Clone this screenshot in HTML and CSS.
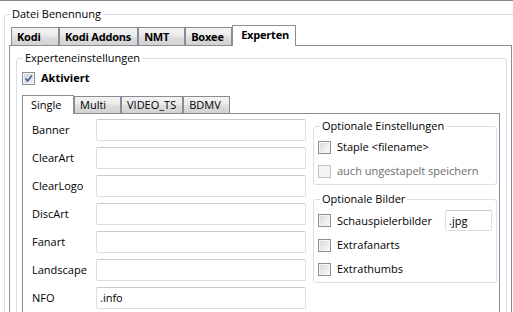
FILE: index.html
```html
<!DOCTYPE html>
<html lang="de">
<head>
    <meta charset="UTF-8">
    <title>Datei Benennung</title>
    <link rel="stylesheet" href="styles.css">
</head>
<body>
<div class="window">
    <div class="group group-main">
        <div class="group-title">Datei Benennung</div>
        <div class="tabs tabs-main">
            <div class="tab">Kodi</div>
            <div class="tab">Kodi Addons</div>
            <div class="tab">NMT</div>
            <div class="tab">Boxee</div>
            <div class="tab active">Experten</div>
        </div>
        <div class="tab-panel panel-main">
            <div class="group group-expert">
                <div class="group-title">Experteneinstellungen</div>
                <label class="check-row check-bold">
                    <span class="checkbox checked">
                        <svg viewBox="0 0 11 11" width="11" height="11"><path d="M2.5 5.5 L4.6 8 L8.8 2.4" /></svg>
                    </span>
                    Aktiviert
                </label>
                <div class="tabs tabs-sub">
                    <div class="tab active">Single</div>
                    <div class="tab">Multi</div>
                    <div class="tab tab-wide">VIDEO_TS</div>
                    <div class="tab">BDMV</div>
                </div>
                <div class="tab-panel panel-sub">
                    <div class="fields">
                        <div class="field"><span class="field-label">Banner</span><span class="input"></span></div>
                        <div class="field"><span class="field-label">ClearArt</span><span class="input"></span></div>
                        <div class="field"><span class="field-label">ClearLogo</span><span class="input"></span></div>
                        <div class="field"><span class="field-label">DiscArt</span><span class="input"></span></div>
                        <div class="field"><span class="field-label">Fanart</span><span class="input"></span></div>
                        <div class="field"><span class="field-label">Landscape</span><span class="input"></span></div>
                        <div class="field"><span class="field-label">NFO</span><span class="input">.info</span></div>
                    </div>
                    <div class="options">
                        <div class="group group-option">
                            <div class="group-title">Optionale Einstellungen</div>
                            <label class="check-row option-row first-row"><span class="checkbox"></span>Staple &lt;filename&gt;</label>
                            <label class="check-row option-row disabled"><span class="checkbox"></span>auch ungestapelt speichern</label>
                        </div>
                        <div class="group group-option group-pictures">
                            <div class="group-title">Optionale Bilder</div>
                            <div class="check-row option-row first-row">
                                <span class="checkbox"></span>Schauspielerbilder
                                <span class="input input-small">.jpg</span>
                            </div>
                            <label class="check-row option-row"><span class="checkbox"></span>Extrafanarts</label>
                            <label class="check-row option-row"><span class="checkbox"></span>Extrathumbs</label>
                        </div>
                    </div>
                </div>
            </div>
        </div>
    </div>
</div>
</body>
</html>
```

FILE: styles.css
```css
html,
body {
    margin: 0;
    height: 312px;
    overflow: hidden;
    background: #fff;
}

body {
    color: #000;
    font-family: "Open Sans", "Noto Sans", sans-serif;
    font-size: 11px;
    line-height: 16px;
}

.window {
    border-top: 1px solid #888;
}

/* group boxes: the title sits on the top border */

.group {
    border: 1px solid #d5dfe5;
    border-radius: 3px;
}

.group-title {
    width: fit-content;
    height: 16px;
    margin: -9px 0 0 1px;
    padding: 0 2px;
    background: #fff;
    line-height: 16px;
    white-space: nowrap;
}

.group-main {
    margin: 13px -20px 0 4px;
    padding: 0 0 0 4px;
}

.group-expert {
    margin: 12px 4px 0 6px;
    padding: 0 6px 0 5px;
}

.group-option {
    padding: 0 4px 1px 4px;
}

.group-option .group-title {
    margin-left: 2px;
}

.group-pictures {
    margin-top: 14px;
}

.group-pictures .first-row {
    height: 25px;
    margin-top: 4px;
}

/* tabs */

.tabs {
    display: flex;
    align-items: flex-end;
}

.tabs-main {
    height: 20px;
    margin-top: 3px;
    padding-left: 2px;
}

.tab {
    box-sizing: border-box;
    height: 18px;
    min-width: 47px;
    padding: 0 6px 0 5px;
    line-height: 17px;
    border: 1px solid #898c95;
    border-bottom: none;
    background: linear-gradient(#f3f3f3, #ebebeb 45%, #dddddd 55%, #d2d2d2);
    white-space: nowrap;
}

.tabs-main .tab {
    font-weight: bold;
    letter-spacing: -0.2px;
}

.tabs-main .tab:first-child {
    min-width: 48px;
}

.tab.active {
    position: relative;
    height: 21px;
    margin-bottom: -1px;
    padding-left: 8px;
    line-height: 18px;
    background: #fff;
    z-index: 1;
}

.tabs-main .tab.active {
    min-width: 64px;
    padding-right: 5px;
}

.tabs-sub {
    height: 18px;
    margin-top: 9px;
}

.tabs-sub .tab {
    height: 17px;
    line-height: 16px;
}

.tabs-sub .tab.active {
    min-width: 52px;
    height: 19px;
    line-height: 17px;
}

.tabs-sub .tab-wide {
    min-width: 60px;
}

.tab-panel {
    border: 1px solid #898c95;
    background: #fff;
}

.panel-main {
    width: 501px;
    padding-bottom: 40px;
}

.panel-sub {
    display: flex;
    align-items: flex-start;
    padding: 5px 1px 40px 9px;
}

/* checkboxes */

.check-row {
    display: flex;
    align-items: center;
    gap: 6px;
    white-space: nowrap;
}

.check-bold {
    height: 16px;
    margin-top: 4px;
    font-weight: bold;
}

.checkbox {
    box-sizing: border-box;
    flex: none;
    width: 13px;
    height: 13px;
    border: 1px solid #8f8f8f;
    background: linear-gradient(135deg, #d6d6d6, #f2f2f2 70%, #fbfbfb);
    box-shadow: inset 0 0 0 1px #f4f4f4;
}

.checkbox svg {
    display: block;
    fill: none;
    stroke: #4b5f8f;
    stroke-width: 1.7;
}

.checkbox.checked {
    background: linear-gradient(135deg, #c9d0dd, #eef1f6);
}

.disabled {
    color: #6d6d6d;
}

.disabled .checkbox {
    border-color: #c3c3c3;
    background: #f4f4f4;
}

.option-row {
    height: 24px;
}

.option-row.first-row {
    margin-top: 1px;
}

/* text fields */

.fields {
    width: 274px;
}

.field {
    display: flex;
    align-items: center;
    height: 22px;
    margin-bottom: 6px;
}

.field-label {
    width: 64px;
}

.input {
    box-sizing: border-box;
    display: block;
    width: 210px;
    height: 22px;
    padding: 2px 3px;
    border: 1px solid #dadfe6;
    border-top-color: #c6cbd2;
    border-radius: 2px;
    line-height: 16px;
}

.input-small {
    width: 47px;
    height: 21px;
    margin-left: auto;
    line-height: 15px;
}

.options {
    width: 184px;
    margin-left: 7px;
    margin-top: 7px;
}
```
